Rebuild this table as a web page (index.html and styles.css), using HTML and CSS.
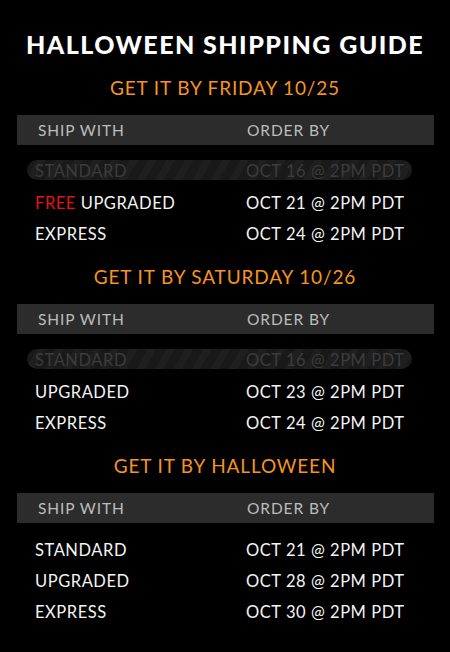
FILE: index.html
```html
<!DOCTYPE html>
<html>
<head>
<meta charset="utf-8">
<link rel="stylesheet" href="styles.css">
</head>
<body>
<div class="guide">
  <h1 class="title">HALLOWEEN SHIPPING GUIDE</h1>

  <section class="sec">
    <h2 class="sub">GET IT BY FRIDAY 10/25</h2>
    <div class="head"><span>SHIP WITH</span><span>ORDER BY</span></div>
    <div class="rows">
      <div class="row off"><span>STANDARD</span><span>OCT 16 @ 2PM PDT</span></div>
      <div class="row"><span><em class="free">FREE</em> UPGRADED</span><span>OCT 21 @ 2PM PDT</span></div>
      <div class="row"><span>EXPRESS</span><span>OCT 24 @ 2PM PDT</span></div>
    </div>
  </section>

  <section class="sec">
    <h2 class="sub">GET IT BY SATURDAY 10/26</h2>
    <div class="head"><span>SHIP WITH</span><span>ORDER BY</span></div>
    <div class="rows">
      <div class="row off"><span>STANDARD</span><span>OCT 16 @ 2PM PDT</span></div>
      <div class="row"><span>UPGRADED</span><span>OCT 23 @ 2PM PDT</span></div>
      <div class="row"><span>EXPRESS</span><span>OCT 24 @ 2PM PDT</span></div>
    </div>
  </section>

  <section class="sec">
    <h2 class="sub">GET IT BY HALLOWEEN</h2>
    <div class="head"><span>SHIP WITH</span><span>ORDER BY</span></div>
    <div class="rows">
      <div class="row"><span>STANDARD</span><span>OCT 21 @ 2PM PDT</span></div>
      <div class="row"><span>UPGRADED</span><span>OCT 28 @ 2PM PDT</span></div>
      <div class="row"><span>EXPRESS</span><span>OCT 30 @ 2PM PDT</span></div>
    </div>
  </section>
</div>
</body>
</html>
```
FILE: styles.css
```css
html, body {
  margin: 0;
  padding: 0;
  background: #000;
}
body {
  width: 450px;
  height: 652px;
  overflow: hidden;
  font-family: Lato, "Open Sans", sans-serif;
}
.guide {
  padding-top: 29px;
}
.title {
  margin: 0;
  height: 30px;
  line-height: 30px;
  text-align: center;
  color: #fff;
  font-size: 25px;
  font-weight: 900;
  letter-spacing: 1.45px;
}
.sec {
  display: flex;
  flex-direction: column;
}
.sub {
  margin: 0;
  height: 56px;
  line-height: 58px;
  text-align: center;
  color: #f7941d;
  font-size: 19px;
  font-weight: 400;
  letter-spacing: 0.85px;
}
.head {
  margin: 0 16px 0 17px;
  height: 30px;
  background: #2c2c2c;
  color: #bcbcbc;
  font-size: 15.5px;
  letter-spacing: 0.9px;
  line-height: 31px;
  display: grid;
  grid-template-columns: 209px 1fr;
  padding-left: 21px;
}
.rows {
  padding-top: 10px;
  display: flex;
  flex-direction: column;
}
.row {
  height: 31px;
  margin: 0 38px 0 27px;
  display: grid;
  grid-template-columns: 211px 1fr;
  padding-left: 8px;
  color: #f4f4f4;
  font-size: 16.5px;
  letter-spacing: 0.55px;
  line-height: 34px;
}
.row.off {
  height: 20px;
  line-height: 22px;
  margin-top: 5px;
  margin-bottom: 6px;
  border-radius: 10px;
  color: #3c3c3c;
  background:
    repeating-linear-gradient(120deg, #191919 0 9px, #1f1f1f 9px 16px);
}
.free {
  font-style: normal;
  color: #e8111b;
}
```
